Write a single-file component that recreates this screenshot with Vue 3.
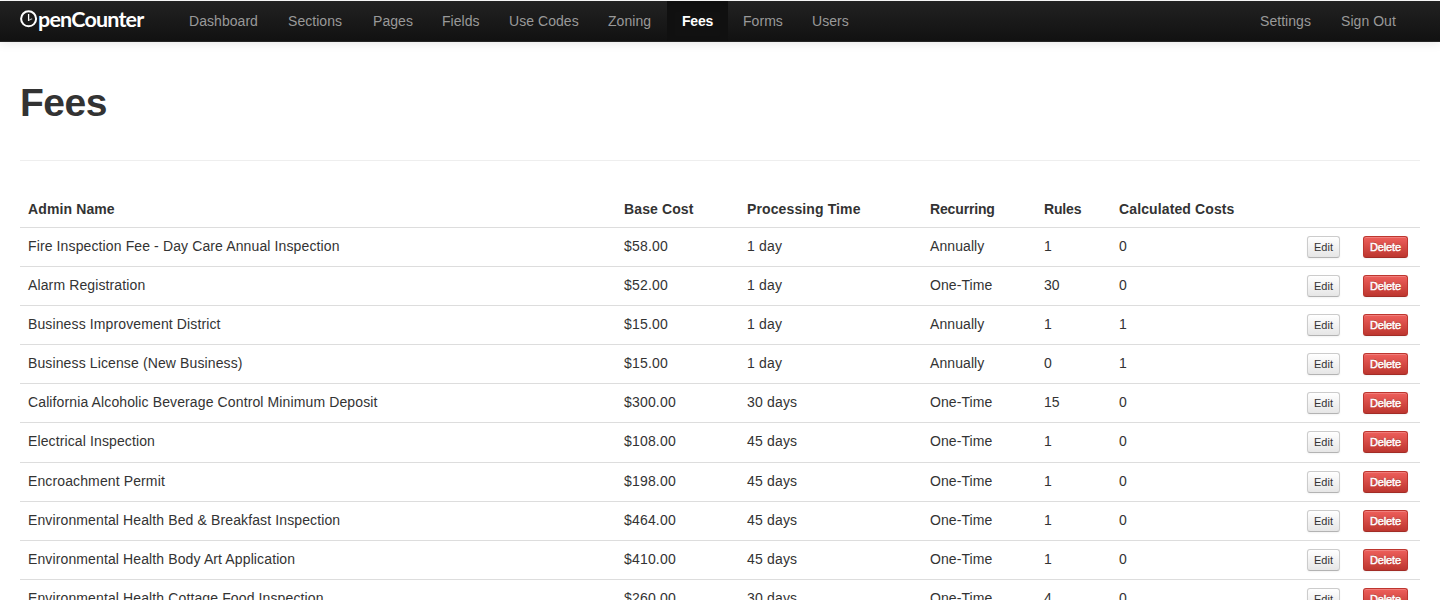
<script setup>
const nav = [
  { label: 'Dashboard', w: 99 },
  { label: 'Sections', w: 85 },
  { label: 'Pages', w: 69 },
  { label: 'Fields', w: 67 },
  { label: 'Use Codes', w: 99 },
  { label: 'Zoning', w: 74 },
  { label: 'Fees', w: 61, active: true },
  { label: 'Forms', w: 69 },
  { label: 'Users', w: 67 },
]
const fees = [
  ['Fire Inspection Fee - Day Care Annual Inspection', '$58.00', '1 day', 'Annually', '1', '0'],
  ['Alarm Registration', '$52.00', '1 day', 'One-Time', '30', '0'],
  ['Business Improvement District', '$15.00', '1 day', 'Annually', '1', '1'],
  ['Business License (New Business)', '$15.00', '1 day', 'Annually', '0', '1'],
  ['California Alcoholic Beverage Control Minimum Deposit', '$300.00', '30 days', 'One-Time', '15', '0'],
  ['Electrical Inspection', '$108.00', '45 days', 'One-Time', '1', '0'],
  ['Encroachment Permit', '$198.00', '45 days', 'One-Time', '1', '0'],
  ['Environmental Health Bed & Breakfast Inspection', '$464.00', '45 days', 'One-Time', '1', '0'],
  ['Environmental Health Body Art Application', '$410.00', '45 days', 'One-Time', '1', '0'],
  ['Environmental Health Cottage Food Inspection', '$260.00', '30 days', 'One-Time', '4', '0'],
]
</script>

<template>
  <div class="page">
    <header class="navbar">
      <a class="brand">
        <svg width="18" height="18" viewBox="0 0 18 18" fill="none" stroke="#fff">
          <circle cx="8.6" cy="8.8" r="7.5" stroke-width="2" />
          <path d="M8.6 4V11" stroke-width="1.3" />
          <path d="M8.6 10.2L12.2 8.8" stroke-width="1.1" stroke="#bbb" />
        </svg>
        <span>penCounter</span>
      </a>
      <nav class="links">
        <a v-for="n in nav" :key="n.label" :class="{ active: n.active }" :style="{ width: n.w + 'px' }">{{ n.label }}</a>
      </nav>
      <nav class="links right">
        <a class="settings">Settings</a>
        <a class="signout">Sign Out</a>
      </nav>
    </header>
    <main>
      <h1>Fees</h1>
      <hr />
      <table>
        <colgroup>
          <col class="c1" /><col class="c2" /><col class="c3" /><col class="c4" /><col class="c5" /><col class="c6" /><col class="c7" /><col class="c8" />
        </colgroup>
        <thead>
          <tr>
            <th>Admin Name</th><th>Base Cost</th><th>Processing Time</th><th>Recurring</th><th>Rules</th><th>Calculated Costs</th><th></th><th></th>
          </tr>
        </thead>
        <tbody>
          <tr v-for="fee in fees" :key="fee[0]">
            <td v-for="(value, i) in fee" :key="i">{{ value }}</td>
            <td><button class="btn">Edit</button></td>
            <td><button class="btn danger">Delete</button></td>
          </tr>
        </tbody>
      </table>
    </main>
  </div>
</template>

<style>
body { margin: 0; background: #fff; }
</style>

<style scoped>
.page {
  height: 600px;
  overflow: hidden;
  font: 14px/20px "Liberation Sans", Arial, sans-serif;
  color: #333;
}
.navbar {
  box-sizing: border-box;
  height: 41px;
  margin-top: 1px;
  padding: 0 29px 0 20px;
  display: flex;
  background: linear-gradient(#222, #111);
  border-bottom: 1px solid #252525;
  box-shadow: 0 1px 10px rgba(0, 0, 0, 0.1);
}
.brand {
  display: flex;
  width: 154px;
  padding-top: 4px;
  color: #fff;
  font: 700 21.5px/28px Lato, sans-serif;
  letter-spacing: -0.8px;
}
.brand svg { margin-top: 5px; flex: none; }
.links { display: flex; }
.links a {
  box-sizing: border-box;
  padding-left: 15px;
  line-height: 40px;
  color: #999;
  letter-spacing: 0.05px;
  white-space: nowrap;
}
.links .active {
  color: #fff;
  font-weight: bold;
  letter-spacing: -0.2px;
  background: #111;
  box-shadow: inset 0 3px 8px rgba(0, 0, 0, 0.125);
}
.right { margin-left: auto; }
.links .settings { width: 81px; }
.links .signout { width: 85px; }
main { padding: 0 20px; }
h1 { margin: 41px 0 0; font-size: 39px; line-height: 40px; letter-spacing: -0.5px; }
hr { margin: 37px 0 30px; border: 0; border-top: 1px solid #eee; }
table { width: 1400px; table-layout: fixed; border-collapse: separate; border-spacing: 0; }
.c1 { width: 596px; }
.c2 { width: 123px; }
.c3 { width: 183px; }
.c4 { width: 114px; }
.c5 { width: 75px; }
.c6 { width: 188px; }
.c7 { width: 56px; }
.c8 { width: 65px; }
th { padding: 8px; height: 20px; text-align: left; letter-spacing: 0.12px; }
th:nth-child(4), th:nth-child(5) { letter-spacing: -0.15px; }
td {
  box-sizing: border-box;
  height: 39px;
  padding: 8px 8px 0;
  border-top: 1px solid #ddd;
  vertical-align: top;
  white-space: nowrap;
}
td:nth-child(1) { letter-spacing: 0.12px; }
td:nth-child(2), td:nth-child(3) { letter-spacing: 0.18px; }
td:nth-child(4) { letter-spacing: 0.08px; }
tbody tr:nth-child(6) td { height: 40px; }
.btn {
  display: block;
  box-sizing: border-box;
  height: 22px;
  padding: 0 6px;
  border: 1px solid #ccc;
  border-bottom-color: #b3b3b3;
  border-radius: 3px;
  font: 11px/20px "Liberation Sans", Arial, sans-serif;
  color: #333;
  background: linear-gradient(#fff, #e6e6e6);
  box-shadow: inset 0 1px 0 rgba(255, 255, 255, 0.2), 0 1px 2px rgba(0, 0, 0, 0.05);
}
.danger {
  width: 45px;
  border-color: #bd362f #bd362f #a22c26;
  color: #fff;
  letter-spacing: -0.15px;
  -webkit-text-stroke: 0.45px #fff;
  text-shadow: 0 -1px 0 rgba(0, 0, 0, 0.25);
  background: linear-gradient(#ee5f5b, #bd362f);
}
</style>
